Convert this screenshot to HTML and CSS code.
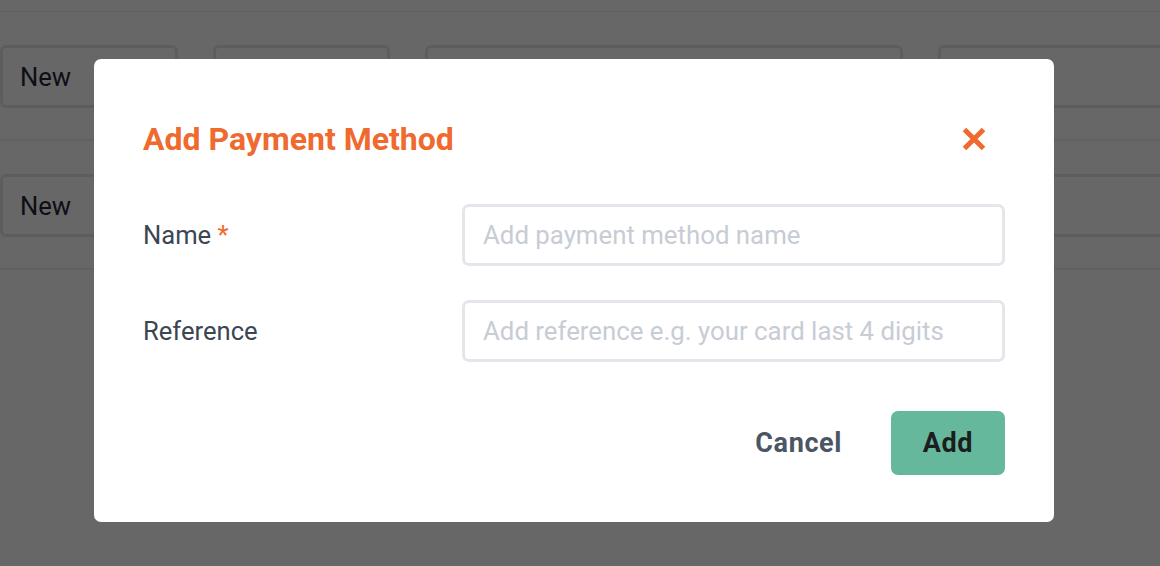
FILE: index.html
```html
<!DOCTYPE html>
<html lang="en">
<head>
<meta charset="utf-8">
<title>Add Payment Method</title>
<link rel="stylesheet" href="styles.css">
</head>
<body>
<div class="page">
  <div class="table">
    <div class="row">
      <div class="cell w1">New</div>
      <div class="cell w2"></div>
      <div class="cell w3"></div>
      <div class="cell w4"></div>
    </div>
    <div class="row">
      <div class="cell w1">New</div>
      <div class="cell w2"></div>
      <div class="cell w3"></div>
      <div class="cell w4"></div>
    </div>
  </div>
</div>
<div class="overlay">
  <div class="modal">
    <div class="modal-head">
      <h2 class="modal-title">Add Payment Method</h2>
      <button class="close" aria-label="Close">
        <svg width="24" height="24" viewBox="0 0 24 24"><path d="M2.5 2.5 L21.5 21.5 M21.5 2.5 L2.5 21.5" stroke="#ef6a2e" stroke-width="5" stroke-linecap="butt" fill="none"/></svg>
      </button>
    </div>
    <div class="form">
      <label class="label">Name <span class="req">*</span></label>
      <input class="input" type="text" placeholder="Add payment method name">
      <label class="label">Reference</label>
      <input class="input" type="text" placeholder="Add reference e.g. your card last 4 digits">
    </div>
    <div class="actions">
      <button class="btn-cancel">Cancel</button>
      <button class="btn-add">Add</button>
    </div>
  </div>
</div>
</body>
</html>
```
FILE: styles.css
```css
* { box-sizing: border-box; }
html, body { margin: 0; padding: 0; }
body {
  width: 1160px;
  height: 566px;
  overflow: hidden;
  background: #ffffff;
  font-family: Roboto, "Liberation Sans", sans-serif;
  position: relative;
}
.page {
  padding-top: 11px;
}
.table {
  border-top: 1px solid #f0f1f3;
}
.row {
  display: flex;
  gap: 35px;
  padding: 33px 0 31px;
  border-bottom: 2px solid #f0f1f3;
  overflow: hidden;
}
.cell {
  flex: none;
  height: 63px;
  border: 3px solid #e5e7eb;
  border-radius: 6px;
  font-size: 25.6px;
  color: #1f2937;
  padding-left: 17px;
  display: flex;
  align-items: center;
}
.w1 { width: 178px; }
.w2 { width: 177px; }
.w3 { width: 478px; }
.w4 { width: 300px; }

.overlay {
  position: absolute;
  inset: 0;
  background: rgba(0, 0, 0, 0.597);
  display: flex;
  justify-content: flex-start;
  align-items: flex-start;
  padding: 59px 0 0 94px;
}
.modal {
  width: 960px;
  height: 463px;
  background: #ffffff;
  border-radius: 7px;
  padding: 48px 49px 47px;
  display: flex;
  flex-direction: column;
}
.modal-head {
  height: 64px;
  display: flex;
  align-items: center;
  justify-content: space-between;
}
.modal-title {
  margin: 0;
  font-size: 32px;
  font-weight: 700;
  color: #ef6a2e;
  letter-spacing: 0;
}
.close {
  border: 0;
  background: none;
  padding: 0;
  width: 24px;
  height: 24px;
  margin-right: 19px;
  display: flex;
}
.form {
  margin-top: 33px;
  display: grid;
  grid-template-columns: 319px 1fr;
  row-gap: 34px;
  align-items: center;
}
.label {
  font-size: 25.6px;
  color: #3c4653;
}
.req { color: #ef6a2e; }
.input {
  width: 100%;
  height: 62px;
  border: 3px solid #e3e6eb;
  border-radius: 7px;
  padding: 0 18px;
  font-family: Roboto, "Liberation Sans", sans-serif;
  font-size: 25.8px;
  color: #374151;
  outline: none;
}
.input::placeholder { color: #c7ccd5; }
.actions {
  margin-top: 49px;
  display: flex;
  justify-content: flex-end;
  align-items: center;
  gap: 49px;
}
.btn-cancel, .btn-add {
  font-family: Roboto, "Liberation Sans", sans-serif;
  font-size: 27px;
  font-weight: 700;
  letter-spacing: 0.6px;
  border: 0;
  cursor: pointer;
}
.btn-cancel {
  background: none;
  color: #4b5563;
  padding: 0;
}
.btn-add {
  width: 114px;
  height: 64px;
  border-radius: 7px;
  background: #66b89c;
  color: #1b1d1f;
}
```
